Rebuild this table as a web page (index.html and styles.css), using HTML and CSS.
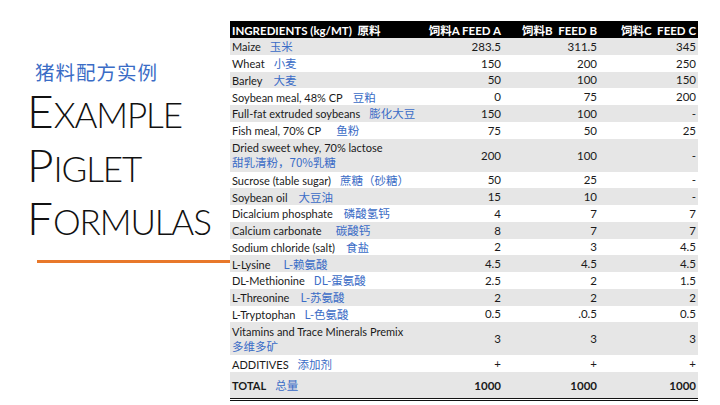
FILE: index.html
```html
<!DOCTYPE html>
<html>
<head>
<meta charset="utf-8">
<link rel="stylesheet" href="styles.css">
</head>
<body>
<div class="slide">
  <div class="left">
    <div class="cn-title">猪料配方实例</div>
    <div class="title">
      <div class="tline"><span class="big">E</span>XAMPLE</div>
      <div class="tline"><span class="big">P</span>IGLET</div>
      <div class="tline"><span class="big">F</span>ORMULAS</div>
    </div>
    <div class="rule"></div>
  </div>
  <div class="table">
    <div class="row head">
      <div class="name">INGREDIENTS (kg/MT)&nbsp; 原料</div>
      <div class="num">饲料A FEED A</div>
      <div class="num">饲料B&nbsp; FEED B</div>
      <div class="num">饲料C&nbsp; FEED C</div>
    </div>
    <div class="row g"><div class="name">Maize<span class="cn">玉米</span></div><div class="num">283.5</div><div class="num">311.5</div><div class="num">345</div></div>
    <div class="row"><div class="name">Wheat<span class="cn">小麦</span></div><div class="num">150</div><div class="num">200</div><div class="num">250</div></div>
    <div class="row g"><div class="name">Barley<span class="cn g11">大麦</span></div><div class="num">50</div><div class="num">100</div><div class="num">150</div></div>
    <div class="row"><div class="name">Soybean meal, 48% CP<span class="cn g10">豆粕</span></div><div class="num">0</div><div class="num">75</div><div class="num">200</div></div>
    <div class="row g"><div class="name">Full-fat extruded soybeans<span class="cn">膨化大豆</span></div><div class="num">150</div><div class="num">100</div><div class="num">-</div></div>
    <div class="row"><div class="name">Fish meal, 70% CP<span class="cn g15">鱼粉</span></div><div class="num">75</div><div class="num">50</div><div class="num">25</div></div>
    <div class="row g tall"><div class="name">Dried sweet whey, 70% lactose<br><span class="cn2">甜乳清粉，70%乳糖</span></div><div class="num">200</div><div class="num">100</div><div class="num">-</div></div>
    <div class="row"><div class="name">Sucrose (table sugar)<span class="cn">蔗糖（砂糖）</span></div><div class="num">50</div><div class="num">25</div><div class="num">-</div></div>
    <div class="row g"><div class="name">Soybean oil<span class="cn g11">大豆油</span></div><div class="num">15</div><div class="num">10</div><div class="num">-</div></div>
    <div class="row"><div class="name">Dicalcium phosphate<span class="cn g11">磷酸氢钙</span></div><div class="num">4</div><div class="num">7</div><div class="num">7</div></div>
    <div class="row g"><div class="name">Calcium carbonate<span class="cn g14">碳酸钙</span></div><div class="num">8</div><div class="num">7</div><div class="num">7</div></div>
    <div class="row"><div class="name">Sodium chloride (salt)<span class="cn g11">食盐</span></div><div class="num">2</div><div class="num">3</div><div class="num">4.5</div></div>
    <div class="row g"><div class="name">L-Lysine<span class="cn g13">L-赖氨酸</span></div><div class="num">4.5</div><div class="num">4.5</div><div class="num">4.5</div></div>
    <div class="row"><div class="name">DL-Methionine<span class="cn">DL-蛋氨酸</span></div><div class="num">2.5</div><div class="num">2</div><div class="num">1.5</div></div>
    <div class="row g"><div class="name">L-Threonine<span class="cn g11">L-苏氨酸</span></div><div class="num">2</div><div class="num">2</div><div class="num">2</div></div>
    <div class="row"><div class="name">L-Tryptophan<span class="cn">L-色氨酸</span></div><div class="num">0.5</div><div class="num">.0.5</div><div class="num">0.5</div></div>
    <div class="row g tall"><div class="name">Vitamins and Trace Minerals Premix<br><span class="cn2">多维多矿</span></div><div class="num">3</div><div class="num">3</div><div class="num">3</div></div>
    <div class="row"><div class="name">ADDITIVES<span class="cn">添加剂</span></div><div class="num">+</div><div class="num">+</div><div class="num">+</div></div>
    <div class="row g total"><div class="name">TOTAL<span class="cn">总量</span></div><div class="num">1000</div><div class="num">1000</div><div class="num">1000</div></div>
  </div>
</div>
</body>
</html>
```
FILE: styles.css
```css
html, body {
  margin: 0;
  padding: 0;
  background: #ffffff;
}
.slide {
  width: 720px;
  height: 405px;
  display: flex;
  font-family: "Lato", "Noto Sans CJK SC", sans-serif;
  color: #1a1a1a;
  overflow: hidden;
}
.left {
  width: 230px;
  flex: none;
  display: flex;
  flex-direction: column;
}
.cn-title {
  margin: 58px 0 0 35px;
  font-family: "Noto Sans CJK SC", sans-serif;
  font-size: 19.5px;
  line-height: 28px;
  color: #3a6cc6;
  letter-spacing: 1px;
}
.title {
  margin: 2px 0 0 27px;
  font-family: "Lato", sans-serif;
  font-weight: 300;
  color: #111;
}
.tline {
  font-size: 35px;
  line-height: 53.5px;
  letter-spacing: -1.1px;
}
.big {
  font-size: 46px;
  line-height: 0;
  letter-spacing: 0;
}
.rule {
  margin: 11px 0 0 37px;
  height: 3px;
  background: #e8782a;
}
.table {
  margin-top: 21px;
  width: 468px;
  flex: none;
  border-bottom: 3px double #111;
  align-self: flex-start;
  font-size: 11.5px;
}
.row {
  display: grid;
  grid-template-columns: 190px 82px 96px 99px;
  height: 16.75px;
  align-items: center;
  white-space: nowrap;
}
.row.g { background: #e6e6e6; }
.row.tall { height: 33px; line-height: 15px; }
.row.head {
  background: #000;
  color: #fff;
  font-weight: 700;
  height: 17px;
}
.row.total {
  height: 26px;
  font-weight: 700;
}
.name {
  padding-left: 2px;
  font-size: 11px;
}
.head .name { font-size: 11.5px; }
.num {
  text-align: right;
  padding-right: 1px;
}
.cn {
  color: #3a6cc6;
  margin-left: 9px;
  font-family: "Noto Sans CJK SC", sans-serif;
  font-weight: 400;
  font-size: 11.5px;
}
.cn.g10 { margin-left: 10px; }
.cn.g11 { margin-left: 11px; }
.cn.g13 { margin-left: 13px; }
.cn.g14 { margin-left: 14px; }
.cn.g15 { margin-left: 15px; }
.cn2 {
  color: #3a6cc6;
  font-family: "Noto Sans CJK SC", sans-serif;
  font-size: 11.5px;
}
```
